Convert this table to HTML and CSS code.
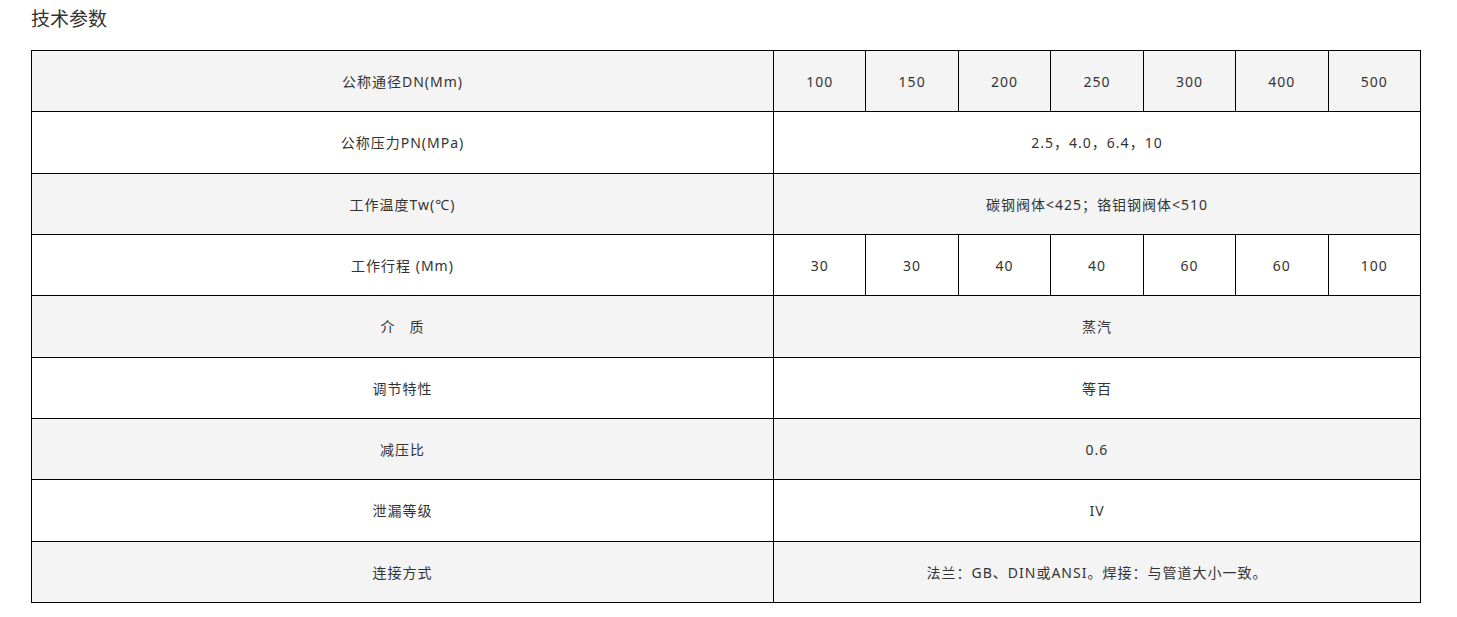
FILE: index.html
```html
<!DOCTYPE html>
<html lang="zh">
<head>
<meta charset="utf-8">
<link rel="stylesheet" href="styles.css">
</head>
<body>
<div class="page">
  <h2 class="title">技术参数</h2>
  <table class="spec">
    <colgroup>
      <col class="c-label">
      <col span="7" class="c-val">
    </colgroup>
    <tr class="alt"><td>公称通径DN(Mm)</td><td>100</td><td>150</td><td>200</td><td>250</td><td>300</td><td>400</td><td>500</td></tr>
    <tr><td>公称压力PN(MPa)</td><td colspan="7">2.5，4.0，6.4，10</td></tr>
    <tr class="alt"><td>工作温度Tw(℃)</td><td colspan="7">碳钢阀体&lt;425；铬钼钢阀体&lt;510</td></tr>
    <tr><td>工作行程 (Mm)</td><td>30</td><td>30</td><td>40</td><td>40</td><td>60</td><td>60</td><td>100</td></tr>
    <tr class="alt"><td>介&nbsp;&nbsp;&nbsp;质</td><td colspan="7">蒸汽</td></tr>
    <tr><td>调节特性</td><td colspan="7">等百</td></tr>
    <tr class="alt"><td>减压比</td><td colspan="7">0.6</td></tr>
    <tr><td>泄漏等级</td><td colspan="7">IV</td></tr>
    <tr class="alt"><td>连接方式</td><td colspan="7">法兰：GB、DIN或ANSI。焊接：与管道大小一致。</td></tr>
  </table>
</div>
</body>
</html>
```
FILE: styles.css
```css
html, body {
  margin: 0;
  padding: 0;
  background: #fff;
}
body {
  font-family: "Noto Sans", "Noto Sans CJK SC", sans-serif;
  color: #333;
}
.page {
  padding: 5px 0 0 31px;
}
.title {
  margin: 0;
  height: 45px;
  font-size: 19px;
  font-weight: normal;
  line-height: 28px;
  color: #333;
}
.spec {
  border-collapse: collapse;
  table-layout: fixed;
  width: 1390px;
  font-size: 14px;
  letter-spacing: 1px;
}
.c-label { width: 742px; }
.spec td {
  border: 1px solid #000;
  height: 58.33px;
  padding: 2px 0 0;
  text-align: center;
  vertical-align: middle;
  line-height: 22px;
}
.spec tr.alt td {
  background: #f4f4f4;
}
```
